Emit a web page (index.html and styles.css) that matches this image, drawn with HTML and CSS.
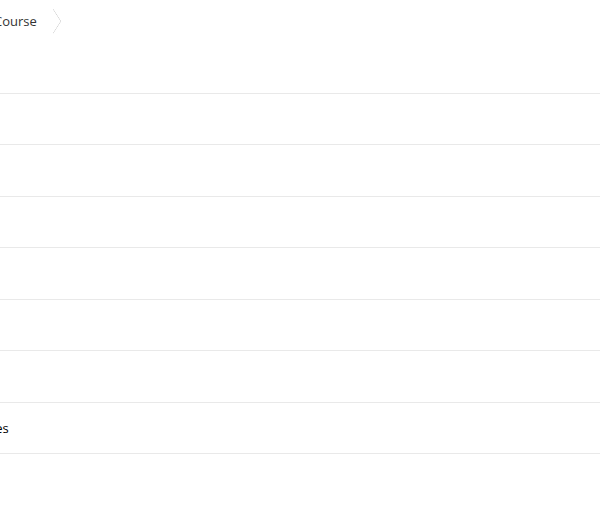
FILE: index.html
```html
<!DOCTYPE html>
<html lang="en">
<head>
  <meta charset="UTF-8">
  <meta name="viewport" content="width=device-width, initial-scale=1.0">
  <title>Course</title>
  <link rel="stylesheet" href="styles.css">
</head>
<body>
  <div class="page">
    <nav class="crumbs">
      <span class="crumb">Course</span>
      <span class="chevron"></span>
    </nav>

    <ul class="rows">
      <li class="row"></li>
      <li class="row"></li>
      <li class="row"></li>
      <li class="row"></li>
      <li class="row"></li>
      <li class="row"></li>
      <li class="row"><span class="label">Notes</span></li>
    </ul>
  </div>
</body>
</html>
```

FILE: styles.css
```css
body {
  font-family: "Open Sans", Arial, sans-serif;
  background-color: #fff;
  margin: 0;
  padding: 0;
  overflow: hidden;
}

.page {
  width: 100%;
}

.crumbs {
  display: flex;
  align-items: center;
  height: 42px;
  margin-left: -6px;
}

.crumb {
  font-size: 13px;
  color: #333;
}

.chevron {
  width: 8px;
  height: 25px;
  margin-left: 16px;
  background:
    linear-gradient(to top right, transparent calc(50% - 0.6px), #d6d6d6 50%, transparent calc(50% + 0.6px)) top / 100% 50% no-repeat,
    linear-gradient(to bottom right, transparent calc(50% - 0.6px), #d6d6d6 50%, transparent calc(50% + 0.6px)) bottom / 100% 50% no-repeat;
}

.rows {
  list-style: none;
  margin: 51px 0 0 0;
  padding: 0;
  border-top: 1px solid #e9e9e9;
}

.row {
  height: 50.43px;
  border-bottom: 1px solid #e9e9e9;
  display: flex;
  align-items: center;
}

.label {
  font-size: 13px;
  color: #000;
  margin-left: -27px;
}
```
